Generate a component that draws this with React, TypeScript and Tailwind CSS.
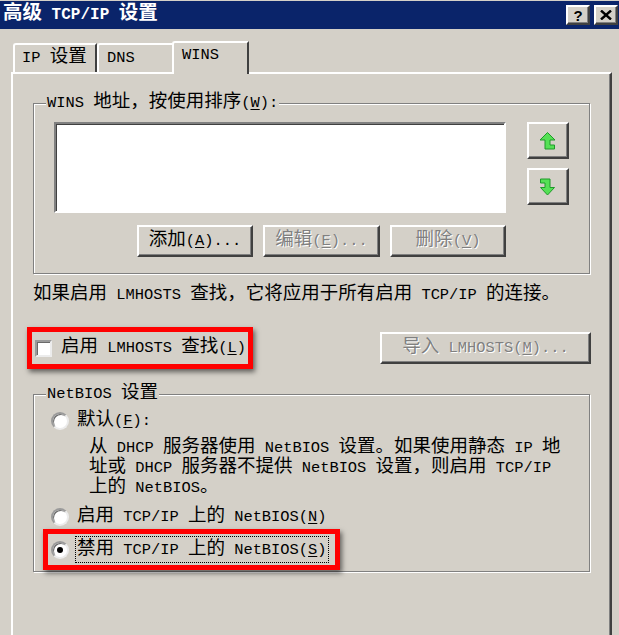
import type { ReactNode } from "react";

const RUNS = /&(.)|([\x20-\x25\x27-\x7e]+)|([^\x20-\x7e]+)/g;

// mixes half-width latin runs (mono) with full-width CJK, "&X" marks the mnemonic letter
function T({ s, latin = "text-[15.4px]" }: { s: string; latin?: string }) {
  const parts: ReactNode[] = [];
  let i = 0;
  for (const m of s.matchAll(RUNS)) {
    if (m[1]) parts.push(<span key={i++} className={latin + " underline underline-offset-2"}>{m[1]}</span>);
    else if (m[2]) parts.push(<span key={i++} className={latin}>{m[2]}</span>);
    else parts.push(<span key={i++}>{m[3]}</span>);
  }
  return <span className="whitespace-nowrap">{parts}</span>;
}

function Btn({ children, className = "", disabled = false }: { children: ReactNode; className?: string; disabled?: boolean }) {
  return (
    <div
      className={`flex items-center justify-center bg-[#d4d0c8] border-2 border-t-white border-l-white border-r-[#404040] border-b-[#404040] shadow-[inset_-1px_-1px_0_#808080] ${
        disabled ? "text-[#808080] [text-shadow:1px_1px_0_#fff]" : "text-black"
      } ${className}`}
    >
      {children}
    </div>
  );
}

function Radio({ checked = false }: { checked?: boolean }) {
  return (
    <div className="w-[18px] h-[18px] shrink-0 rounded-full bg-white border-2 border-t-[#9a9a9a] border-l-[#9a9a9a] border-r-[#ececec] border-b-[#ececec] shadow-[inset_1px_1px_0_#6a6a6a] flex items-center justify-center">
      {checked && <div className="w-[6px] h-[6px] rounded-full bg-black" />}
    </div>
  );
}

function Group({ label, children, className = "" }: { label: string; children: ReactNode; className?: string }) {
  return (
    <fieldset className={`ml-[20px] w-[557px] border border-[#808080] shadow-[inset_1px_1px_0_#fff,1px_1px_0_#fff] ${className}`}>
      <legend className="ml-[12px] px-[1px] leading-[22px] bg-[#d4d0c8]">
        <T s={label} />
      </legend>
      {children}
    </fieldset>
  );
}

function UpIcon() {
  return (
    <svg width="16" height="18" viewBox="0 0 16 18">
      <polygon points="7.5,0.5 15,8 10,8 10,13 14.5,13 14.5,17 5,17 5,8 0,8" fill="#55e055" stroke="#1f9a2a" strokeWidth="1" />
    </svg>
  );
}

function DownIcon() {
  return (
    <svg width="16" height="18" viewBox="0 0 16 18">
      <polygon points="0.5,1 10,1 10,9.5 14.5,9.5 7.5,17 0.5,9.5 5,9.5 5,5 0.5,5" fill="#55e055" stroke="#1f9a2a" strokeWidth="1" />
    </svg>
  );
}

export default function App() {
  return (
    <div className="w-[619px] h-[635px] overflow-hidden bg-[#d4d0c8] flex flex-col text-black text-[18.5px] font-['Liberation_Mono','Noto_Sans_CJK_SC',monospace]">
      {/* title bar */}
      <div className="mt-[1px] h-[28px] bg-[#0a246a] flex items-center justify-between pl-[3px] pr-[1px]">
        <div className="text-white font-bold text-[19.5px] leading-none">
          <T s="高级 TCP/IP 设置" latin="text-[16px]" />
        </div>
        <div className="flex gap-[4px]">
          <Btn className="w-[24px] h-[20px]">
            <span className="font-['Liberation_Sans',sans-serif] font-bold text-[15px] leading-none">?</span>
          </Btn>
          <Btn className="w-[24px] h-[20px]">
            <svg width="12" height="10" viewBox="0 0 12 10">
              <path d="M1 0.5 L11 9.5 M11 0.5 L1 9.5" stroke="#000" strokeWidth="2.4" />
            </svg>
          </Btn>
        </div>
      </div>

      {/* tabs */}
      <div className="flex items-end pl-[13px] pt-[12px]">
        <div className="w-[84px] h-[29px] pl-[7px] flex items-center border-t-2 border-l-2 border-t-white border-l-white border-r-2 border-r-[#404040] rounded-tl-[3px] leading-none">
          <T s="IP 设置" />
        </div>
        <div className="w-[75px] h-[29px] pl-[8px] flex items-center border-t-2 border-l-2 border-t-white border-l-white rounded-tl-[3px] leading-none">
          <T s="DNS" />
        </div>
        <div className="relative z-10 -mb-[2px] w-[77px] h-[33px] pl-[8px] pb-[6px] flex items-center bg-[#d4d0c8] border-t-2 border-l-2 border-t-white border-l-white border-r-2 border-r-[#404040] rounded-tl-[3px] leading-none">
          <T s="WINS" />
        </div>
      </div>

      {/* tab panel */}
      <div className="ml-[11px] w-[601px] flex-1 flex flex-col border-t-2 border-l-2 border-t-white border-l-white border-r-2 border-r-[#404040] shadow-[inset_-1px_0_0_#808080]">
        <Group label="WINS 地址，按使用排序(&W):" className="mt-[18px] pt-[8px] pb-[16px]">
          <div className="pl-[20px] flex items-start gap-[21px]">
            <div className="w-[452px]">
              <div className="h-[91px] bg-white border-2 border-t-[#808080] border-l-[#808080] border-r-white border-b-white shadow-[inset_1px_1px_0_#404040]" />
              <div className="mt-[12px] flex justify-end gap-[10px]">
                <Btn className="w-[116px] h-[32px]"><T s="添加(&A)..." /></Btn>
                <Btn className="w-[117px] h-[32px]" disabled><T s="编辑(&E)..." /></Btn>
                <Btn className="w-[116px] h-[32px]" disabled><T s="删除(&V)" /></Btn>
              </div>
            </div>
            <div className="flex flex-col gap-[9px]">
              <Btn className="w-[42px] h-[37px]"><UpIcon /></Btn>
              <Btn className="w-[42px] h-[37px]"><DownIcon /></Btn>
            </div>
          </div>
        </Group>

        <div className="ml-[20px] mt-[10px] leading-[22px]">
          <T s="如果启用 LMHOSTS 查找，它将应用于所有启用 TCP/IP 的连接。" />
        </div>

        <div className="ml-[14px] mr-[19px] mt-[21px] flex items-center justify-between">
          <div className="w-[226px] h-[42px] border-[5px] border-[#ff0000] shadow-[2px_3px_5px_rgba(0,0,0,0.55)] flex items-center pl-[3px] gap-[9px]">
            <div className="w-[17px] h-[17px] shrink-0 bg-white border-2 border-t-[#9a9a9a] border-l-[#9a9a9a] border-r-[#ececec] border-b-[#ececec] shadow-[inset_1px_1px_0_#6a6a6a]" />
            <span className="leading-[22px]"><T s="启用 LMHOSTS 查找(&L)" /></span>
          </div>
          <Btn className="w-[211px] h-[32px]" disabled><T s="导入 LMHOSTS(&M)..." /></Btn>
        </div>

        <Group label="NetBIOS 设置" className="mt-[14px] pt-[5px] pb-[1px]">
          <div className="pl-[17px]">
            <div className="h-[22px] flex items-center gap-[8px]">
              <Radio />
              <span className="leading-[22px]"><T s="默认(&F):" /></span>
            </div>
            <div className="ml-[38px] mt-[6px] leading-[19px]">
              <T s="从 DHCP 服务器使用 NetBIOS 设置。如果使用静态 IP 地" />
              <br />
              <T s="址或 DHCP 服务器不提供 NetBIOS 设置，则启用 TCP/IP" />
              <br />
              <T s="上的 NetBIOS。" />
            </div>
            <div className="mt-[8px] h-[22px] flex items-center gap-[8px]">
              <Radio />
              <span className="leading-[22px]"><T s="启用 TCP/IP 上的 NetBIOS(&N)" /></span>
            </div>
            <div className="mt-[1px] -ml-[8px] w-[297px] h-[41px] border-[5px] border-[#ff0000] shadow-[2px_3px_5px_rgba(0,0,0,0.55)] flex items-center pl-[3px] gap-[6px]">
              <Radio checked />
              <span className="h-[27px] px-[1px] flex items-center border border-dotted border-black leading-[22px]">
                <T s="禁用 TCP/IP 上的 NetBIOS(&S)" />
              </span>
            </div>
          </div>
        </Group>
      </div>
    </div>
  );
}
